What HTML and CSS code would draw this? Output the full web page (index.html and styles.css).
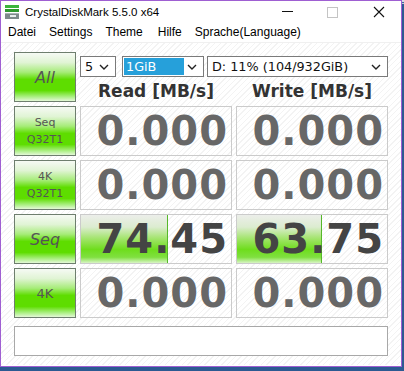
FILE: index.html
```html
<!DOCTYPE html>
<html lang="de">
<head>
    <meta charset="UTF-8">
    <title>CrystalDiskMark 5.5.0 x64</title>
    <link rel="stylesheet" href="styles.css">
</head>
<body>
    <div class="window">
        <div class="titlebar">
            <svg class="app-icon" width="16" height="16" viewBox="0 0 16 16">
                <rect x="1" y="1" width="14" height="3" fill="#3cb43c"/>
                <rect x="1" y="5" width="14" height="3" fill="#2e9a2e"/>
                <rect x="1" y="9" width="14" height="6" fill="#7d8a8a"/>
                <rect x="1" y="9" width="14" height="1" fill="#a8b4b4"/>
                <rect x="6" y="11" width="6" height="2" fill="#e8eeee"/>
            </svg>
            <span class="title">CrystalDiskMark 5.5.0 x64</span>
            <div class="win-controls">
                <span class="ctl ctl-min"></span>
                <span class="ctl ctl-max"></span>
                <svg class="ctl-close" width="12" height="12" viewBox="0 0 12 12">
                    <path d="M1 1 L11 11 M11 1 L1 11" stroke="#111" stroke-width="1.1"/>
                </svg>
            </div>
        </div>
        <div class="menubar">
            <span class="menu-item m-datei">Datei</span>
            <span class="menu-item m-settings">Settings</span>
            <span class="menu-item m-theme">Theme</span>
            <span class="menu-item m-hilfe">Hilfe</span>
            <span class="menu-item m-lang">Sprache(Language)</span>
        </div>
        <div class="client">
            <div class="grid">
                <div class="btn btn-big btn-italic">All</div>
                <div class="top-area">
                    <div class="selects">
                        <div class="select sel-count"><span>5</span><svg width="10" height="6" viewBox="0 0 10 6"><path d="M1 1 L5 5 L9 1" fill="none" stroke="#222" stroke-width="1.4"/></svg></div>
                        <div class="select sel-size"><span class="picked">1GiB</span><svg width="10" height="6" viewBox="0 0 10 6"><path d="M1 1 L5 5 L9 1" fill="none" stroke="#222" stroke-width="1.4"/></svg></div>
                        <div class="select sel-drive"><span>D: 11% (104/932GiB)</span><svg width="10" height="6" viewBox="0 0 10 6"><path d="M1 1 L5 5 L9 1" fill="none" stroke="#222" stroke-width="1.4"/></svg></div>
                    </div>
                    <div class="headers">
                        <div class="head">Read [MB/s]</div>
                        <div class="head">Write [MB/s]</div>
                    </div>
                </div>

                <div class="btn btn-small">Seq<br>Q32T1</div>
                <div class="value zero">0.000</div>
                <div class="value zero">0.000</div>

                <div class="btn btn-small">4K<br>Q32T1</div>
                <div class="value zero">0.000</div>
                <div class="value zero">0.000</div>

                <div class="btn btn-big btn-italic">Seq</div>
                <div class="value"><div class="bar" style="width: 86px"></div><span class="num">74.45</span></div>
                <div class="value"><div class="bar" style="width: 84px"></div><span class="num">63.75</span></div>

                <div class="btn btn-mid">4K</div>
                <div class="value zero">0.000</div>
                <div class="value zero">0.000</div>
            </div>
            <div class="comment"></div>
        </div>
    </div>
</body>
</html>
```

FILE: styles.css
```css
body {
    margin: 0;
    width: 404px;
    height: 371px;
    overflow: hidden;
    background: linear-gradient(#d8dde4 0, #d8dde4 2px, #3b6aa0 2px, #3b6aa0 3px, #c4ccd6 3px, #c4ccd6 4px, #2c5a92 4px);
    background-color: #2c5a92;
    font-family: "Liberation Sans", Arial, sans-serif;
}

.window {
    width: 400px;
    height: 365px;
    border: 1px solid #9f5fd2;
    background-color: #fff;
}

.titlebar {
    display: flex;
    align-items: center;
    height: 21px;
    position: relative;
}

.app-icon {
    margin-left: 3px;
    margin-top: 1px;
}

.title {
    margin-left: 5px;
    font-size: 11.5px;
    color: #000;
}

.win-controls .ctl-min {
    position: absolute;
    left: 281px;
    top: 10px;
    width: 11px;
    height: 1px;
    background: #111;
}

.win-controls .ctl-max {
    position: absolute;
    left: 326px;
    top: 6px;
    width: 9px;
    height: 9px;
    border: 1px solid #c4c4c4;
}

.win-controls .ctl-close {
    position: absolute;
    left: 372px;
    top: 5px;
}

.menubar {
    display: flex;
    align-items: center;
    height: 20px;
    font-size: 12px;
    color: #000;
    border-bottom: 1px solid #f0f0f0;
}

.menu-item {
    white-space: nowrap;
}

.m-datei { margin-left: 7px; }
.m-settings { margin-left: 13px; }
.m-theme { margin-left: 13px; }
.m-hilfe { margin-left: 15px; }
.m-lang { margin-left: 13px; }

.client {
    height: 322px;
    padding: 9px 13px 0 13px;
    box-sizing: border-box;
    background: repeating-linear-gradient(135deg, #ffffff 0, #ffffff 3px, #f3f3f3 3px, #f3f3f3 4px);
}

.grid {
    display: grid;
    grid-template-columns: 62px 152px 152px;
    grid-auto-rows: 50px;
    gap: 4px;
}

.btn {
    border: 1px solid #6e7e6e;
    box-sizing: border-box;
    background: linear-gradient(#f6faf4 0%, #e0f4d4 20%, #a6ec78 40%, #5edd00 55%, #5edd00 78%, #a4ee78 90%, #e4f8d8 100%);
    color: #555;
    display: flex;
    align-items: center;
    justify-content: center;
    text-align: center;
    font-family: "DejaVu Sans", Verdana, sans-serif;
}

.btn-big {
    font-size: 16px;
}

.btn-italic {
    font-style: italic;
}

.btn-small {
    font-size: 11px;
    line-height: 17px;
}

.btn-mid {
    font-size: 13px;
}

.top-area {
    grid-column: 2 / 4;
}

.selects {
    display: flex;
    margin-top: 4px;
    height: 21px;
}

.select {
    display: flex;
    align-items: center;
    justify-content: space-between;
    box-sizing: border-box;
    height: 21px;
    border: 1px solid #7a7a7a;
    background: #fff;
    font-family: "DejaVu Sans", Verdana, sans-serif;
    font-size: 12.8px;
    color: #111;
    padding: 0 6px 0 4px;
}

.sel-count {
    width: 36px;
}

.sel-size {
    width: 82px;
    margin-left: 6px;
    padding-left: 1px;
}

.sel-size .picked {
    background: #26a0da;
    color: #fff;
    width: 60px;
    height: 17px;
    line-height: 17px;
    padding-left: 2px;
    box-sizing: border-box;
}

.sel-drive {
    flex: 1;
    margin-left: 3px;
}

.headers {
    display: grid;
    grid-template-columns: 152px 152px;
    gap: 4px;
    margin-top: 4px;
}

.head {
    text-align: center;
    font-family: "DejaVu Sans", Verdana, sans-serif;
    font-weight: bold;
    font-size: 17px;
    color: #333;
    line-height: 20px;
}

.value {
    position: relative;
    border: 1px solid #cbcbcb;
    box-sizing: border-box;
    text-align: right;
    padding-right: 3px;
    font-family: "DejaVu Sans", Verdana, sans-serif;
    font-weight: bold;
    font-size: 40px;
    line-height: 49px;
    letter-spacing: 1px;
    color: #444;
}

.value.zero {
    color: #676767;
}

.value .num {
    position: relative;
}

.bar {
    position: absolute;
    left: 0;
    top: 0;
    bottom: 0;
    border-right: 1px solid #56b82a;
    background: linear-gradient(#eceeea 0%, #dcecd0 25%, #a0e468 50%, #6edd1c 72%, #80e040 88%, #d8f4c4 100%);
}

.comment {
    margin-top: 8px;
    height: 30px;
    border: 1px solid #a8a8a8;
    box-sizing: border-box;
    background: #fff;
}
```
